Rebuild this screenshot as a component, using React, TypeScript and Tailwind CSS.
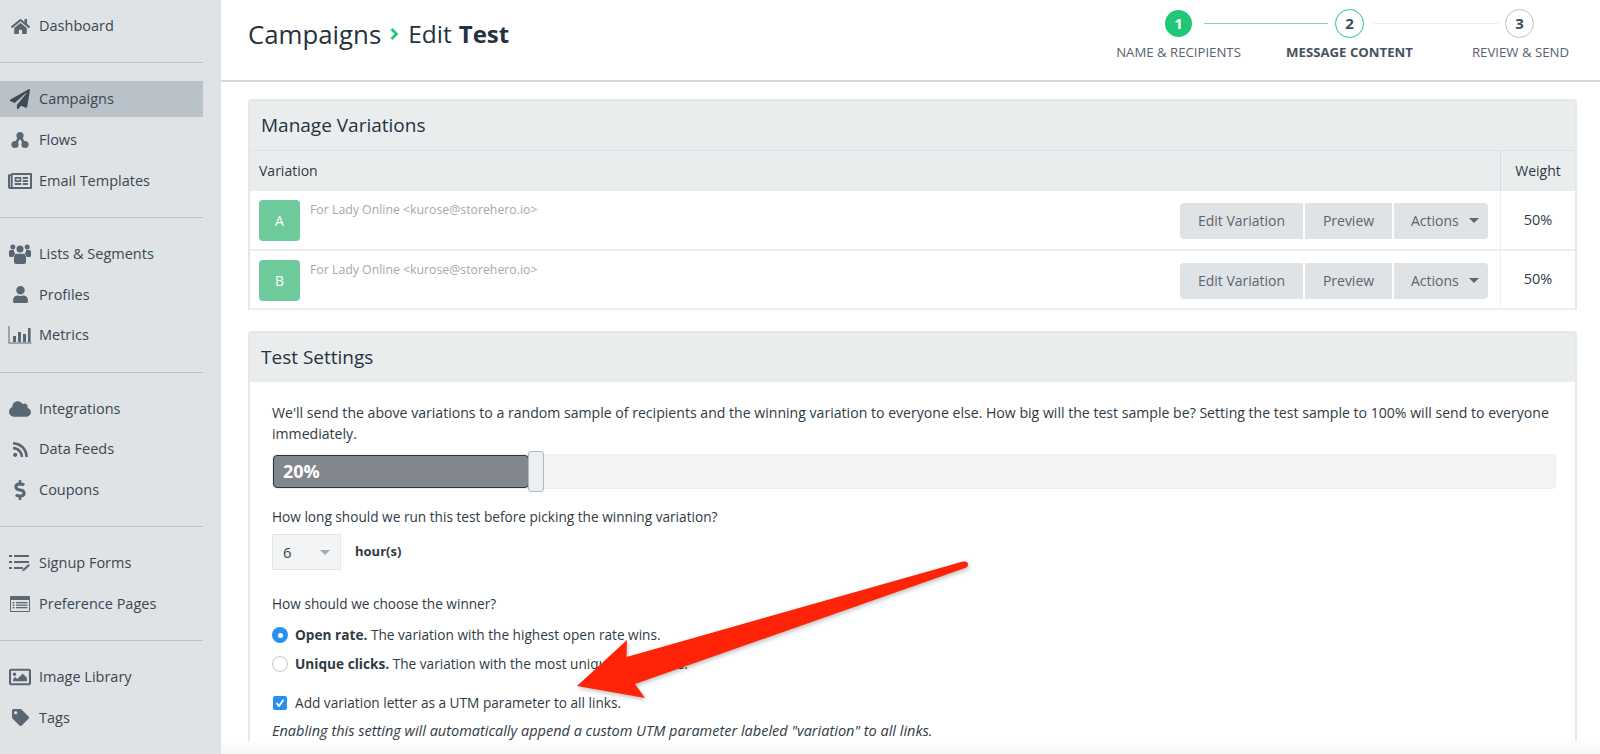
import type { ReactNode } from "react";
import {
  FaHome,
  FaPaperPlane,
  FaRegNewspaper,
  FaUser,
  FaCloud,
  FaRss,
  FaDollarSign,
  FaTag,
  FaRegImage,
} from "react-icons/fa";

function FlowsIcon() {
  return (
    <svg width="18" height="18" viewBox="0 0 18 18" fill="currentColor">
      <circle cx="9" cy="4.5" r="3.6" />
      <circle cx="4" cy="13.5" r="3.6" />
      <circle cx="14" cy="13.5" r="3.6" />
      <path d="M7 6 L3.5 12 L6 13 L9 8 L12 13 L14.5 12 L11 6 Z" />
    </svg>
  );
}

function UsersIcon() {
  return (
    <svg width="22" height="20" viewBox="0 0 22 20" fill="currentColor">
      <circle cx="3.800" cy="3" r="2.500" />
      <circle cx="18.200" cy="3" r="2.500" />
      <circle cx="11" cy="5" r="3.500" />
      <path d="M0 7.500a1.500 1.500 0 0 1 1.500-1.500h3.300a5 5 0 0 0 1.500 3.500 6 6 0 0 0-2 3.500H1.500A1.500 1.500 0 0 1 0 11.500z" />
      <path d="M22 7.500a1.500 1.500 0 0 0-1.500-1.500h-3.300a5 5 0 0 1-1.500 3.500 6 6 0 0 1 2 3.500h2.800a1.500 1.500 0 0 0 1.500-1.500z" />
      <path d="M8 9.800h6a3 3 0 0 1 3 3V18a2 2 0 0 1-2 2H7a2 2 0 0 1-2-2v-5.200a3 3 0 0 1 3-3z" />
    </svg>
  );
}

function MetricsIcon() {
  return (
    <svg width="24" height="18" viewBox="0 0 24 18" fill="currentColor">
      <path d="M0.5 0h1v16.5H23.5v1H0.5z" />
      <rect x="5" y="10" width="3" height="6" />
      <rect x="10" y="6" width="3" height="10" />
      <rect x="15" y="8" width="3" height="8" />
      <rect x="20" y="2" width="2.6" height="14" />
    </svg>
  );
}

function SignupIcon() {
  return (
    <svg width="22" height="18" viewBox="0 0 22 18" fill="currentColor">
      <rect x="0" y="1" width="3" height="2" />
      <rect x="5" y="1" width="15" height="2" />
      <rect x="0" y="7" width="3" height="2" />
      <rect x="5" y="7" width="15" height="2" />
      <rect x="0" y="13" width="3" height="2" />
      <rect x="5" y="13" width="9" height="2" />
      <path d="M13 17.5l1-2.5 5.5-5 1.5 1.5-5.500 5z" />
    </svg>
  );
}

function PreferenceIcon() {
  return (
    <svg width="20" height="16" viewBox="0 0 20 16" fill="currentColor">
      <path
        fillRule="evenodd"
        d="M1 0h18a1 1 0 0 1 1 1v14a1 1 0 0 1-1 1H1a1 1 0 0 1-1-1V1a1 1 0 0 1 1-1zm0 4v11h18V4z"
      />
      <rect x="2.500" y="6" width="2" height="1.300" />
      <rect x="2.500" y="8.500" width="2" height="1.300" />
      <rect x="2.500" y="11" width="2" height="1.300" />
      <rect x="6" y="6" width="11.500" height="1.300" />
      <rect x="6" y="8.500" width="11.500" height="1.300" />
      <rect x="6" y="11" width="11.500" height="1.300" />
    </svg>
  );
}

interface NavEntry {
  label: string;
  icon: ReactNode;
  active?: boolean;
}

const groups: NavEntry[][] = [
  [
    { label: "Campaigns", icon: <FaPaperPlane size={20} />, active: true },
    { label: "Flows", icon: <FlowsIcon /> },
    { label: "Email Templates", icon: <FaRegNewspaper size={24} /> },
  ],
  [
    { label: "Lists & Segments", icon: <UsersIcon /> },
    { label: "Profiles", icon: <FaUser size={17} /> },
    { label: "Metrics", icon: <MetricsIcon /> },
  ],
  [
    { label: "Integrations", icon: <FaCloud size={22} /> },
    { label: "Data Feeds", icon: <FaRss size={17} /> },
    { label: "Coupons", icon: <FaDollarSign size={20} /> },
  ],
  [
    { label: "Signup Forms", icon: <SignupIcon /> },
    { label: "Preference Pages", icon: <PreferenceIcon /> },
  ],
  [
    { label: "Image Library", icon: <FaRegImage size={22} /> },
    { label: "Tags", icon: <FaTag size={17} /> },
  ],
];

function NavItem({ label, icon, active }: NavEntry) {
  return (
    <div className={`flex h-[36px] items-center ${active ? "bg-[#b9c1c9]" : ""}`}>
      <span
        className={`flex w-[39px] shrink-0 justify-center pl-[1px] ${active ? "text-[#3f4a55]" : "text-[#5a6773]"}`}
      >
        {icon}
      </span>
      <span className="text-[14.500px] text-[#3a4651]">{label}</span>
    </div>
  );
}

function Sidebar() {
  return (
    <aside className="w-[221px] shrink-0 bg-[#dfe3e6] pt-[8px] pr-[18px]">
      <NavItem label="Dashboard" icon={<FaHome size={19} />} />
      {groups.map((items, i) => (
        <div
          key={i}
          className="mt-[18.300px] flex flex-col gap-[4.670px] border-t border-[#bcc4cc] pt-[18px]"
        >
          {items.map((item) => (
            <NavItem key={item.label} {...item} />
          ))}
        </div>
      ))}
    </aside>
  );
}

function Stepper() {
  return (
    <div className="w-[513px] shrink-0 -mr-[6px] pt-[8px]">
      <div className="flex h-[30px] items-center">
        <div className="ml-[72px] flex h-[27px] w-[27px] items-center justify-center rounded-full bg-[#1fc877] text-[15px] font-bold text-white">
          1
        </div>
        <div className="ml-[12px] h-[1px] w-[124px] bg-[#7fd6a4]" />
        <div className="ml-[7px] flex h-[29px] w-[29px] items-center justify-center rounded-full border border-[#1fc877] text-[15px] font-bold text-[#3f4c58]">
          2
        </div>
        <div className="ml-[10px] h-[1px] w-[124px] bg-[#e8eaec]" />
        <div className="ml-[7px] flex h-[29px] w-[29px] items-center justify-center rounded-full border border-[#b9c1c9] text-[15px] font-bold text-[#3f4c58]">
          3
        </div>
      </div>
      <div className="mt-[5px] grid grid-cols-3 text-center text-[13.200px] uppercase text-[#56626d]">
        <span>Name &amp; Recipients</span>
        <span className="font-bold text-[#46525d]">Message Content</span>
        <span>Review &amp; Send</span>
      </div>
    </div>
  );
}

function SelectArrow({ color }: { color: string }) {
  return (
    <svg width="10" height="5" viewBox="0 0 10 5" fill={color}>
      <path d="M0 0h10L5 5z" />
    </svg>
  );
}

function VariationRow({ letter }: { letter: string }) {
  return (
    <div className="flex h-[60px] border-b-2 border-[#eceef0] last:h-[59px]">
      <div className="flex flex-1 items-start px-[9px] pt-[9px]">
        <div className="flex h-[41px] w-[41px] items-center justify-center rounded-[4px] bg-[#6dcb9b] text-[14px] text-white">
          {letter}
        </div>
        <div className="ml-[10px] text-[12.300px] leading-[20px] text-[#a4a9ae]">
          For Lady Online &lt;kurose@storehero.io&gt;
        </div>
        <div className="ml-auto mr-[3px] mt-[3px] flex h-[36px] gap-[2px] pb-[1px] text-[14px] text-[#5a6670]">
          <div className="flex h-[36px] w-[123px] items-center justify-center rounded-l-[4px] bg-[#dfe3e6] pb-[1px]">
            Edit Variation
          </div>
          <div className="flex h-[36px] w-[87px] items-center justify-center bg-[#dfe3e6] pb-[1px]">
            Preview
          </div>
          <div className="flex h-[36px] w-[94px] items-center justify-between rounded-r-[4px] bg-[#dfe3e6] pb-[1px] pl-[17px] pr-[9px]">
            Actions
            <SelectArrow color="#5a6670" />
          </div>
        </div>
      </div>
      <div className="flex w-[75px] items-center justify-center border-l border-[#eceef0] pb-[1px] text-[14.500px] text-[#2f3a44]">
        50%
      </div>
    </div>
  );
}

function ManageVariations() {
  return (
    <section className="overflow-hidden rounded-t-[4px] border-x-2 border-t-2 border-[#e5e8ea] bg-white">
      <div className="flex h-[49px] items-center bg-[#eaedee] px-[11px] text-[19px] text-[#26323d]">
        Manage Variations
      </div>
      <div className="flex h-[41px] items-center border-t border-[#dfe3e6] bg-[#eaedee] text-[14px] text-[#2f3a44]">
        <div className="flex-1 pb-[2px] pl-[9px]">Variation</div>
        <div className="flex h-full w-[75px] items-center justify-center border-l border-[#d5dade] pb-[2px]">
          Weight
        </div>
      </div>
      <VariationRow letter="A" />
      <VariationRow letter="B" />
    </section>
  );
}

function TestSettings() {
  return (
    <section className="mt-[21px] rounded-t-[4px] border-x-2 border-t-2 border-[#e5e8ea] bg-white">
      <div className="flex h-[49px] items-center bg-[#eaedee] px-[11px] text-[19px] text-[#26323d]">
        Test Settings
      </div>
      <div className="pl-[22px] pr-[19px] pt-[21px] text-[13.650px] text-[#2f3a44]">
        <p className="text-[14.100px] leading-[20.500px] pr-[4px]">
          We'll send the above variations to a random sample of recipients and
          the winning variation to everyone else. How big will the test sample
          be? Setting the test sample to 100% will send to everyone immediately.
        </p>
        <div className="relative mt-[10px] mb-[18px] h-[35px] rounded-[4px] border border-[#eceef0] bg-[#f3f4f5]">
          <div className="flex h-full w-[256px] items-center rounded-[4px] border border-[#2f353b] bg-[#82868d] pl-[9px] text-[18px] font-bold text-white">
            20%
          </div>
          <div className="absolute left-[255px] top-[-4px] h-[41px] w-[16px] rounded-[3px] border border-[#b0b8c0] bg-[#eceff1]" />
        </div>
        <p className="leading-[20px]">
          How long should we run this test before picking the winning variation?
        </p>
        <div className="mt-[7px] flex items-center">
          <div className="flex h-[36px] w-[69px] items-center justify-between border border-[#e3e6e8] bg-[#f3f4f5] pl-[10px] pr-[10px] text-[15px] text-[#3a4651]">
            6
            <SelectArrow color="#a3a9af" />
          </div>
          <span className="ml-[14px] mb-[2px] text-[13px] font-bold leading-[20px] text-[#2f3a44]">
            hour(s)
          </span>
        </div>
        <p className="mt-[24px] leading-[20px]">How should we choose the winner?</p>
        <div className="mt-[11px] flex h-[20px] items-center">
          <span className="flex h-[16px] w-[16px] items-center justify-center rounded-full bg-[#2a90f0]">
            <span className="h-[5px] w-[5px] rounded-full bg-white" />
          </span>
          <span className="ml-[7px]">
            <b>Open rate.</b> The variation with the highest open rate wins.
          </span>
        </div>
        <div className="mt-[9px] flex h-[20px] items-center">
          <span className="h-[16px] w-[16px] rounded-full border border-[#c3c7cb] bg-white" />
          <span className="ml-[7px]">
            <b>Unique clicks.</b> The variation with the most unique clicks wins.
          </span>
        </div>
        <div className="mt-[19px] flex h-[20px] items-center">
          <span className="flex h-[14px] w-[14px] ml-[1px] items-center justify-center rounded-[2px] bg-[#2a90f0]">
            <svg width="10" height="10" viewBox="0 0 10 10" fill="none" stroke="white" strokeWidth="1.800">
              <path d="M1.500 5.200 L4 8 L8.500 1.800" />
            </svg>
          </span>
          <span className="ml-[8px]">Add variation letter as a UTM parameter to all links.</span>
        </div>
        <p className="mt-[8px] text-[14.500px] italic leading-[20px]">
          Enabling this setting will automatically append a custom UTM parameter
          labeled "variation" to all links.
        </p>
      </div>
    </section>
  );
}

export default function App() {
  return (
    <div
      className="relative flex h-[754px] w-[1600px] overflow-hidden bg-white"
      style={{ fontFamily: "'Open Sans', sans-serif" }}
    >
      <Sidebar />
      <main className="min-w-0 flex-1">
        <header className="flex h-[82px] items-start justify-between border-b-2 border-[#d3d8de] pl-[27px]">
          <h1 className="mt-[17px] flex items-center text-[24.500px] leading-[34px] text-[#26323d]">
            <span className="text-[25.800px]">Campaigns</span>
            <svg className="ml-[9px] mr-[9px]" width="9" height="12" viewBox="0 0 9 12" fill="none" stroke="#1fc877" strokeWidth="2.800">
              <path d="M1.500 1 L6.500 6 L1.500 11" />
            </svg>
            <span>Edit</span>
            <b className="ml-[7px] text-[24px]">Test</b>
          </h1>
          <Stepper />
        </header>
        <div className="pl-[27px] pr-[23px] pt-[17px]">
          <ManageVariations />
          <TestSettings />
        </div>
      </main>
      <div className="pointer-events-none absolute bottom-0 left-[221px] right-0 h-[14px] bg-gradient-to-b from-transparent to-[#f6f6f6]" />
      <svg
        className="pointer-events-none absolute left-0 top-0 drop-shadow-[1px_2px_2px_rgba(0,0,0,0.25)]"
        width="1600"
        height="754"
        viewBox="0 0 1600 754"
      >
        <path
          d="M963 561.500 Q968 561 968 564.500 Q968 567 965 568 L635 684 L645 698 L577 686 L627 640 L626.500 657 Z"
          fill="#ff2408"
        />
      </svg>
    </div>
  );
}
